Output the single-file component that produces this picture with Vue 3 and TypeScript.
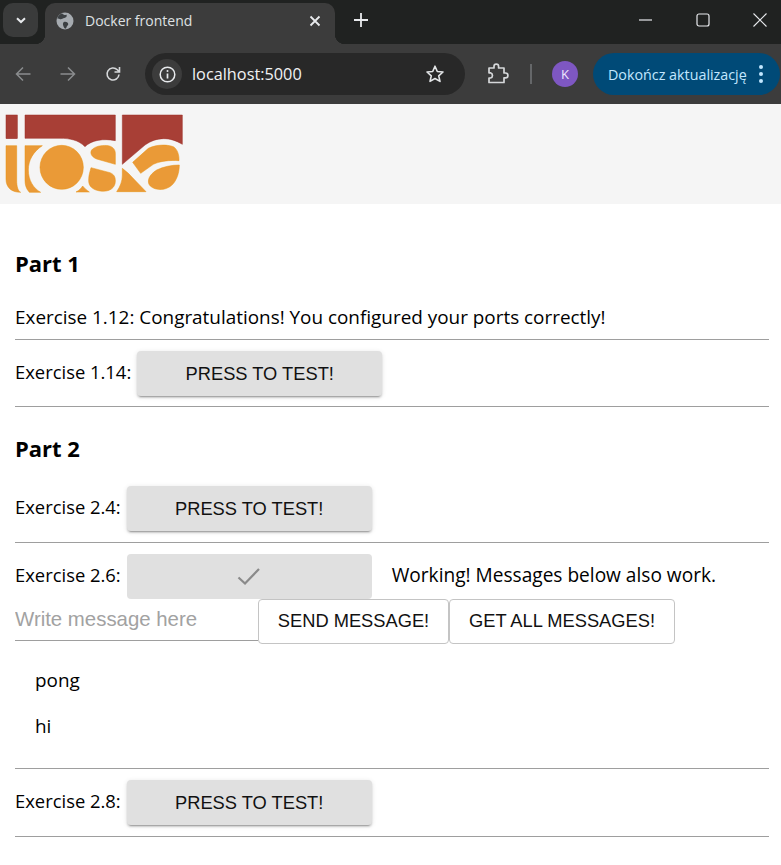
<script setup lang="ts">
import { ref } from "vue";

const messages = ref<string[]>(["pong", "hi"]);
const draft = ref("");
</script>

<template>
  <div class="browser">
    <div class="tabstrip">
      <div class="tab_search">
        <svg width="14" height="14" viewBox="0 0 14 14"><path d="M3 5.2 7 9l4-3.8" fill="none" stroke="#e8eaed" stroke-width="2"/></svg>
      </div>
      <div class="tab">
        <svg class="globe" width="18" height="18" viewBox="0 0 18 18">
          <circle cx="9" cy="9" r="8.5" fill="#a6abb0"/>
          <path d="M6 1.2c1 1.6 3 2 4.6 1.6.6 1.6-.6 3-2.2 3.2-1.8.3-2.6 1.6-4.2 1.2C3 6.800 2 6.300 1.200 6.800 1.600 4.300 3.500 2.200 6 1.200zM8 10c1.800-.6 3.800.2 4.200 1.800.3 1.300-.8 1.700-1.400 2.600-.4.800-.5 1.800-1.200 2.300-1.600-.2-1.800-1.900-2.300-3C6.700 12.500 6.900 10.400 8 10z" fill="#3c4043"/>
        </svg>
        <span class="tab_title">Docker frontend</span>
        <svg class="tab_close" width="12" height="12" viewBox="0 0 12 12"><path d="M1.500 1.500l9 9m0-9l-9 9" stroke="#e8eaed" stroke-width="1.800"/></svg>
      </div>
      <svg class="new_tab" width="14" height="14" viewBox="0 0 14 14"><path d="M7 0v14M0 7h14" stroke="#e8eaed" stroke-width="1.800"/></svg>
      <div class="window_controls">
        <svg width="14" height="14" viewBox="0 0 14 14"><path d="M0 7h13" stroke="#e8eaed" stroke-width="1.200"/></svg>
        <svg width="14" height="14" viewBox="0 0 14 14"><rect x="1" y="1" width="12" height="12" rx="2" fill="none" stroke="#e8eaed" stroke-width="1.200"/></svg>
        <svg width="14" height="14" viewBox="0 0 14 14"><path d="M.5.500l13 13m0-13l-13 13" stroke="#e8eaed" stroke-width="1.100"/></svg>
      </div>
    </div>

    <div class="toolbar">
      <div class="nav_icons">
        <svg width="16" height="16" viewBox="0 0 16 16"><path d="M15.500 8H1.500M8 1.500 1.500 8 8 14.500" fill="none" stroke="#8a8c8e" stroke-width="1.500"/></svg>
        <svg width="16" height="16" viewBox="0 0 16 16"><path d="M.5 8h14M8 1.500 14.500 8 8 14.500" fill="none" stroke="#8a8c8e" stroke-width="1.500"/></svg>
        <svg width="16" height="16" viewBox="0 0 16 16"><path d="M14 8.500A6 6 0 1 1 12.300 3.800L14.500 6M14.500 1v5h-5" fill="none" stroke="#d5d7d9" stroke-width="1.600"/></svg>
      </div>
      <div class="omnibox">
        <div class="info_chip">
          <svg width="17" height="17" viewBox="0 0 17 17">
            <circle cx="8.500" cy="8.500" r="7.300" fill="none" stroke="#e8eaed" stroke-width="1.500"/>
            <path d="M8.500 7.500v5" stroke="#e8eaed" stroke-width="1.700"/>
            <circle cx="8.500" cy="5" r="1" fill="#e8eaed"/>
          </svg>
        </div>
        <span class="url">localhost:5000</span>
        <svg class="star" width="20" height="20" viewBox="0 0 20 20"><path d="M10 2.200l2.300 5.300 5.700.5-4.300 3.800 1.300 5.600L10 14.500l-5 2.900 1.300-5.600L2 8l5.700-.5z" fill="none" stroke="#e3e5e7" stroke-width="1.600" stroke-linejoin="round"/></svg>
      </div>
      <svg class="puzzle" width="22" height="22" viewBox="0 0 22 22"><path d="M2 5.500h5V4a2.300 2.300 0 0 1 4.600 0v1.500h5.400v5h1.500a2.400 2.400 0 0 1 0 4.800H17V20H2v-4.500h1.500a2.700 2.700 0 0 0 0-5.200H2z" transform="translate(0 -.5)" fill="none" stroke="#d5d7d9" stroke-width="1.700" stroke-linejoin="round"/></svg>
      <div class="separator"></div>
      <div class="avatar">K</div>
      <div class="update_pill">
        <span>Dokończ aktualizację</span>
        <svg width="6" height="20" viewBox="0 0 6 20"><circle cx="3" cy="3" r="2" fill="#c2e7ff"/><circle cx="3" cy="10" r="2" fill="#c2e7ff"/><circle cx="3" cy="17" r="2" fill="#c2e7ff"/></svg>
      </div>
    </div>
  </div>

  <header class="site_header">
    <svg class="logo" width="200" height="100" viewBox="0 -3 600 300">
      <g fill="#a83f36" stroke="#9c2f26" stroke-width="1.500">
        <rect x="18" y="30" width="34" height="71"/>
        <path d="M75 30H346V107C310 100 275 105 255 125 235 105 210 100 180 100H75Z"/>
        <path d="M367 30H547V118C510 95 470 95 435 120L367 178Z"/>
      </g>
      <g fill="#ea9a37" stroke="#e8900f" stroke-width="1.500">
        <path d="M18 122H50V225C50 245 54 258 62 262 35 262 18 248 18 222Z"/>
        <path d="M75 122H127C100 140 85 165 85 195 85 225 100 250 122 262H88C78 250 75 240 75 225Z"/>
        <ellipse cx="185" cy="187" rx="65" ry="66"/>
        <path d="M228 261C238 256 243 250 248 243 254 250 260 256 268 261Z"/>
        <path d="M346 178 290 162C272 155 268 140 278 132 290 122 310 120 325 122 340 125 346 135 346 145Z"/>
        <path d="M273 188 330 203C342 208 346 215 346 228 346 248 330 262 300 258 280 255 265 245 266 225 266 210 270 200 273 188Z"/>
        <path d="M367 190 385 205 438 260H350C360 245 367 230 367 210Z"/>
        <path d="M398 172 445 130C470 118 500 118 520 125 532 132 538 150 537 167 510 165 480 168 460 178L422 205Z"/>
        <path d="M538 180C538 205 528 240 500 250 480 258 455 252 447 238 442 225 447 210 470 195 490 185 515 180 538 180Z"/>
      </g>
    </svg>
  </header>

  <main class="content">
    <h2 class="part_title">Part 1</h2>
    <div class="text_row">Exercise 1.12: Congratulations! You configured your ports correctly!</div>
    <hr />
    <div class="exercise_row first_row">
      <span class="label">Exercise 1.14:</span>
      <button class="test_button">PRESS TO TEST!</button>
    </div>
    <hr />

    <h2 class="part_title part_two">Part 2</h2>
    <div class="exercise_row">
      <span class="label">Exercise 2.4:</span>
      <button class="test_button">PRESS TO TEST!</button>
    </div>
    <hr />
    <div class="exercise_row working_row">
      <span class="label">Exercise 2.6:</span>
      <button class="test_button done" disabled>
        <svg width="24" height="18" viewBox="0 0 24 18"><path d="M1.500 9.500 8 15.500 22 1" fill="none" stroke="#8a8a8a" stroke-width="2.200"/></svg>
      </button>
      <span class="working_text">Working! Messages below also work.</span>
    </div>
    <div class="message_form">
      <input v-model="draft" class="message_input" placeholder="Write message here" />
      <button class="outline_button send">SEND MESSAGE!</button>
      <button class="outline_button get">GET ALL MESSAGES!</button>
    </div>
    <ul class="message_list">
      <li v-for="message in messages" :key="message">{{ message }}</li>
    </ul>
    <hr />
    <div class="exercise_row">
      <span class="label">Exercise 2.8:</span>
      <button class="test_button">PRESS TO TEST!</button>
    </div>
    <hr />
  </main>
</template>

<style>
html,
body {
  margin: 0;
  background: #ffffff;
  overflow: hidden;
}
</style>

<style scoped>
.browser {
  font-family: "Open Sans", sans-serif;
  color: #e8eaed;
}

.tabstrip {
  height: 44px;
  box-sizing: border-box;
  padding: 3px 0 0 3px;
  background: #202221;
  display: flex;
  align-items: flex-start;
}

.tab_search {
  width: 35px;
  height: 34px;
  border-radius: 10px;
  background: #3a3b3b;
  display: flex;
  align-items: center;
  justify-content: center;
}

.tab {
  position: relative;
  width: 290px;
  height: 41px;
  margin-left: 7px;
  box-sizing: border-box;
  padding: 0 14px 6px 11px;
  border-radius: 10px 10px 0 0;
  background: #3c3c3c;
  display: flex;
  align-items: center;
}

.tab::before,
.tab::after {
  content: "";
  position: absolute;
  bottom: 0;
  width: 10px;
  height: 10px;
}

.tab::before {
  left: -10px;
  background: radial-gradient(circle at 0 0, transparent 10px, #3c3c3c 10.5px);
}

.tab::after {
  right: -10px;
  background: radial-gradient(circle at 100% 0, transparent 10px, #3c3c3c 10.5px);
}

.tab_title {
  margin-left: 11px;
  font-size: 14px;
  color: #dfe1e3;
}

.tab_close {
  margin-left: auto;
}

.new_tab {
  margin: 10px 0 0 19px;
}

.window_controls {
  margin-left: auto;
  margin-top: 10px;
  padding-right: 14px;
  display: flex;
  gap: 43px;
}

.toolbar {
  height: 60px;
  box-sizing: border-box;
  padding: 9px 1px 0 15px;
  background: #3c3c3c;
  display: flex;
  align-items: flex-start;
}

.nav_icons {
  width: 130px;
  height: 42px;
  display: flex;
  align-items: center;
  gap: 29px;
}

.omnibox {
  width: 320px;
  height: 42px;
  box-sizing: border-box;
  padding: 0 20px 0 7px;
  border-radius: 21px;
  background: #282828;
  display: flex;
  align-items: center;
}

.info_chip {
  width: 30px;
  height: 30px;
  border-radius: 50%;
  background: #3c3c3c;
  display: flex;
  align-items: center;
  justify-content: center;
}

.url {
  margin-left: 10px;
  font-size: 16.3px;
  color: #f1f3f4;
}

.star {
  margin-left: auto;
}

.puzzle {
  margin: 10px 0 0 22px;
}

.separator {
  width: 2px;
  height: 20px;
  margin: 11px 0 0 21px;
  background: #656769;
}

.avatar {
  width: 26px;
  height: 26px;
  margin: 8px 0 0 20px;
  border-radius: 50%;
  background: #7e57c2;
  color: #f0e8ff;
  font-size: 13px;
  display: flex;
  align-items: center;
  justify-content: center;
}

.update_pill {
  width: 187px;
  height: 42px;
  margin-left: 15px;
  box-sizing: border-box;
  padding: 0 16px 0 15px;
  border-radius: 21px;
  background: #004a77;
  color: #c2e7ff;
  font-size: 14.3px;
  display: flex;
  align-items: center;
  justify-content: space-between;
}

.site_header {
  height: 100px;
  background: #f5f5f5;
}

.logo {
  display: block;
}

.content {
  padding: 0 12px 0 15px;
  font-family: "Open Sans", sans-serif;
  font-size: 18.9px;
  color: #000000;
}

.part_title {
  height: 30px;
  margin: 45px 0 24px;
  font-size: 22px;
  font-weight: 700;
  line-height: 28px;
}

.part_two {
  margin: 27px 0 11px;
}

.text_row {
  height: 28px;
  padding-bottom: 8px;
  line-height: 28px;
}

hr {
  height: 1px;
  margin: 0;
  border: 0;
  background: #9e9e9e;
}

.exercise_row {
  display: flex;
  align-items: center;
  padding: 11px 0;
}

.first_row {
  padding-bottom: 10px;
}

.working_row {
  padding-bottom: 0;
}

.label {
  width: auto;
  margin: 0 6px 4px 0;
  font-size: 18.4px;
}

.test_button {
  width: 245px;
  height: 45px;
  border: 0;
  border-radius: 4px;
  background: #e0e0e0;
  font-family: "Liberation Sans", sans-serif;
  font-size: 18.3px;
  color: #111111;
  box-shadow: 0 3px 1px -2px rgba(0, 0, 0, 0.2), 0 2px 2px 0 rgba(0, 0, 0, 0.14), 0 1px 5px 0 rgba(0, 0, 0, 0.12);
}

.done {
  display: flex;
  align-items: center;
  justify-content: center;
  box-shadow: none;
}

.working_text {
  margin: 0 0 4px 20px;
  font-size: 19.1px;
}

.message_form {
  display: flex;
  align-items: flex-start;
}

.message_input {
  width: 243px;
  height: 42px;
  box-sizing: border-box;
  padding: 0;
  border: 0;
  border-bottom: 1px solid #9e9e9e;
  outline: none;
  font-family: "Liberation Sans", sans-serif;
  font-size: 20.4px;
  color: #111111;
}

.message_input::placeholder {
  color: #a2a2a2;
  opacity: 1;
}

.outline_button {
  height: 45px;
  box-sizing: border-box;
  padding: 0 0 2px;
  border: 1px solid #c4c4c4;
  border-radius: 4px;
  background: #ffffff;
  font-family: "Liberation Sans", sans-serif;
  font-size: 18.3px;
  color: #111111;
}

.send {
  width: 191px;
}

.get {
  width: 226px;
}

.message_list {
  margin: 13px 0 0;
  padding: 0 0 19px 20px;
  list-style: none;
}

.message_list li {
  height: 46px;
  line-height: 46px;
}
</style>
